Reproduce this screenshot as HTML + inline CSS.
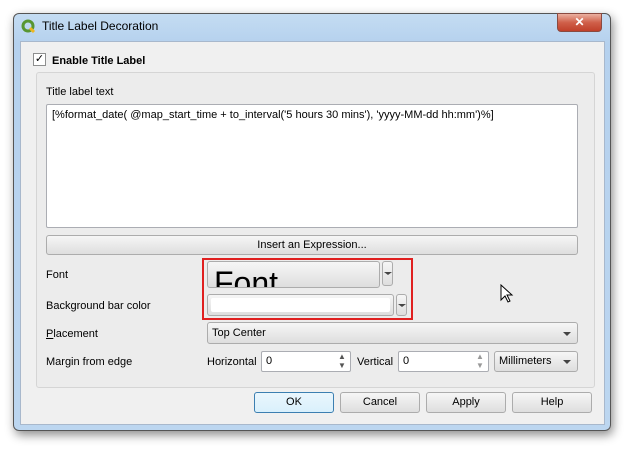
<!DOCTYPE html>
<html><head><style>
*{box-sizing:border-box}
body{margin:0;width:629px;height:451px;background:#fff;font-family:"Liberation Sans",sans-serif;font-size:11px;color:#000;position:relative;overflow:hidden}
.a{position:absolute}
.win{left:13px;top:13px;width:598px;height:418px;border:1px solid #555;border-radius:6px;background:linear-gradient(#c4dcf2,#b5d1ee 30px,#bcd6f0);box-shadow:2px 4px 10px rgba(0,0,0,.45)}
.cont{left:20px;top:41px;width:585px;height:384px;background:#f0f0f0;border:1px solid #a8b8cc}
.btn{background:linear-gradient(#f6f6f6,#dedede);border:1px solid #acacac;border-radius:3px;text-align:center;line-height:19px}
.in{background:#fff;border:1px solid #abadb3;border-radius:2px}
.arr{width:0;height:0;border-left:4px solid transparent;border-right:4px solid transparent;border-top:4px solid #444}
</style></head><body>
<div class="a win"></div>
<div class="a" style="left:557px;top:13px;width:45px;height:19px;border-radius:0 0 4px 4px;background:linear-gradient(#eab0a0,#d0604a 50%,#c0402a);border:1px solid #8a4a40;color:#fff;font-weight:bold;text-align:center;line-height:17px;font-size:12px">✕</div>
<svg class="a" style="left:21px;top:19px" width="15" height="15" viewBox="0 0 15 15"><circle cx="7" cy="7" r="5" fill="none" stroke="#589632" stroke-width="3"/><path d="M9 9l4 4" stroke="#eeb620" stroke-width="3"/></svg>
<div class="a" style="left:42px;top:19px;font-size:12px">Title Label Decoration</div>
<div class="a cont"></div>
<div class="a" style="left:33px;top:53px;width:13px;height:13px;border:1px solid #8e8f8f;background:#fff;font-size:11px;line-height:11px;text-align:center">✓</div>
<div class="a" style="left:52px;top:55px;font-weight:bold">Enable Title Label</div>
<div class="a" style="left:36px;top:72px;width:559px;height:316px;border:1px solid #d5d5d5;border-radius:3px;background:#ececec"></div>
<div class="a" style="left:46px;top:86px">Title label text</div>
<div class="a in" style="left:46px;top:104px;width:532px;height:124px;padding:4px 5px">[%format_date( @map_start_time + to_interval('5 hours 30 mins'), 'yyyy-MM-dd hh:mm')%]</div>
<div class="a btn" style="left:46px;top:235px;width:532px;height:20px">Insert an Expression...</div>
<div class="a" style="left:46px;top:269px">Font</div>
<div class="a" style="left:46px;top:300px">Background bar color</div>
<div class="a" style="left:46px;top:328px"><u>P</u>lacement</div>
<div class="a" style="left:46px;top:356px">Margin from edge</div>
<div class="a" style="left:202px;top:258px;width:211px;height:62px;border:2px solid #e02020"></div>
<div class="a btn" style="left:207px;top:261px;width:173px;height:27px;overflow:hidden;text-align:left;padding-left:6px;font-size:32px;line-height:42px">Font</div>
<div class="a btn" style="left:382px;top:261px;width:11px;height:25px"><div class="arr" style="margin:10px 0 0 1px;border-width:3px 4px"></div></div>
<div class="a btn" style="left:207px;top:294px;width:187px;height:22px"><div style="margin:3px;height:14px;background:#fff;border-radius:2px"></div></div>
<div class="a btn" style="left:396px;top:294px;width:11px;height:22px"><div class="arr" style="margin:9px 0 0 1px;border-width:3px 4px"></div></div>
<div class="a btn" style="left:207px;top:322px;width:371px;height:22px;text-align:left;padding-left:4px;line-height:21px">Top Center<div class="arr a" style="right:6px;top:9px"></div></div>
<div class="a" style="left:207px;top:356px">Horizontal</div>
<div class="a in" style="left:261px;top:351px;width:90px;height:21px;padding:3px 4px">0</div>
<div class="a" style="left:338px;top:352px;color:#555;font-size:8px;line-height:9px">▲<br>▼</div>
<div class="a" style="left:357px;top:356px">Vertical</div>
<div class="a in" style="left:398px;top:351px;width:91px;height:21px;padding:3px 4px">0</div>
<div class="a" style="left:476px;top:352px;color:#999;font-size:8px;line-height:9px">▲<br>▼</div>
<div class="a btn" style="left:494px;top:351px;width:84px;height:21px;text-align:left;padding-left:4px">Millimeters<div class="arr a" style="right:6px;top:8px"></div></div>
<div class="a btn" style="left:254px;top:392px;width:80px;height:21px;border-color:#3c7fb1;background:linear-gradient(#eaf6fd,#d9f0fc)">OK</div>
<div class="a btn" style="left:340px;top:392px;width:80px;height:21px">Cancel</div>
<div class="a btn" style="left:426px;top:392px;width:80px;height:21px">Apply</div>
<div class="a btn" style="left:512px;top:392px;width:80px;height:21px">Help</div>
<svg class="a" style="left:500px;top:284px" width="14" height="20" viewBox="0 0 14 20"><path d="M1 1v15l4-4 3 6 2-1-3-6h5z" fill="#fff" stroke="#000"/></svg>
</body></html>
